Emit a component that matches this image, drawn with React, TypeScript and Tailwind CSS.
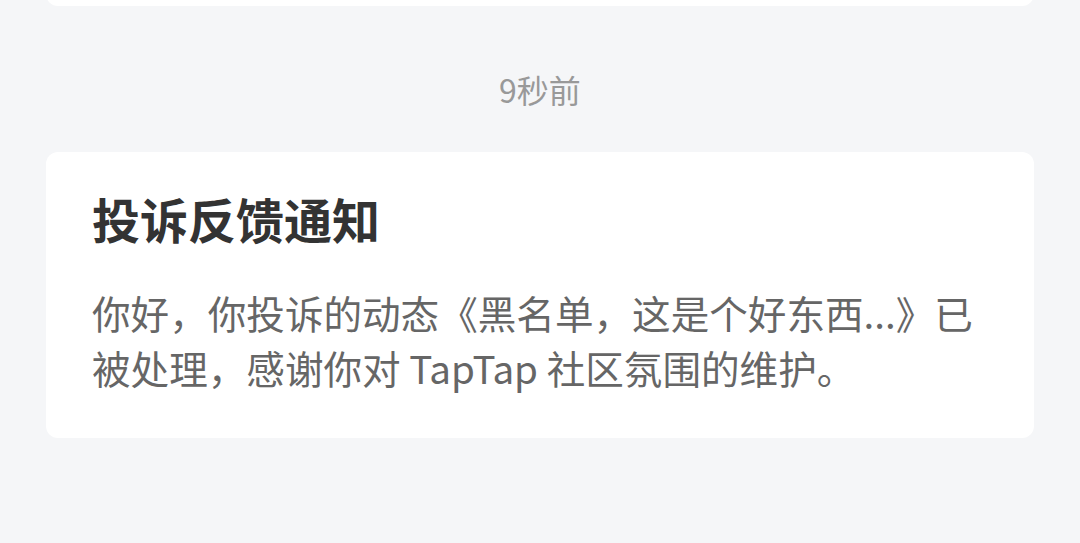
export default function App() {
  return (
    <div
      className="min-h-[543px] w-full bg-[#f5f6f8] overflow-hidden"
      style={{ fontFamily: '"Noto Sans CJK SC", "Noto Sans", sans-serif' }}
    >
      <div className="mx-[46px] -mt-[24px] h-[30px] rounded-[12px] bg-white" />

      <p className="mt-[63px] text-center text-[32px] leading-[40px] text-[#999999]">9秒前</p>

      <div className="mx-[46px] mt-[43px] rounded-[12px] bg-white px-[46px] pt-[38px] pb-[43px]">
        <h2 className="text-[48px] font-bold leading-[56px] text-[#333333]">投诉反馈通知</h2>
        <p className="mt-[39px] text-[38.6px] leading-[55px] text-[#666666]">
          你好，你投诉的动态《黑名单，这是个好东西...》已被处理，感谢你对 TapTap 社区氛围的维护。
        </p>
      </div>
    </div>
  );
}
